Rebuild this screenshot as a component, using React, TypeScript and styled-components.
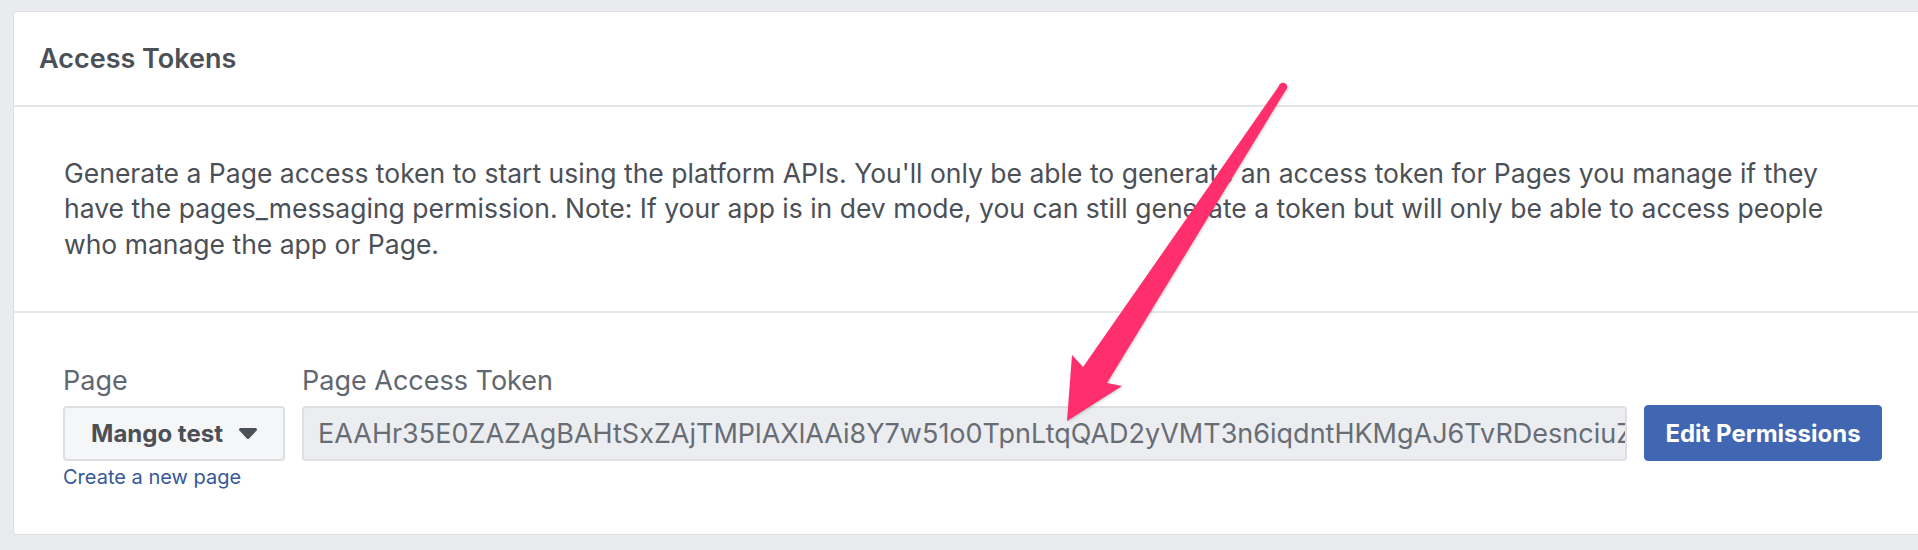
import React from "react";
import styled, { createGlobalStyle } from "styled-components";

const GlobalStyle = createGlobalStyle`
  * {
    box-sizing: border-box;
  }

  body {
    margin: 0;
    background-color: #e9ebee;
    font-family: Inter, "Liberation Sans", Arial, sans-serif;
    color: #4b4f56;
  }
`;

const Page = styled.div`
  position: relative;
  width: 1918px;
  height: 550px;
  padding: 11px 0 0 13px;
  overflow: hidden;
`;

const Card = styled.section`
  background-color: #fff;
  border: 1px solid #dddfe2;
  border-right: none;
  border-radius: 4px 0 0 4px;
  height: 524px;
`;

const CardHeader = styled.header`
  display: flex;
  align-items: center;
  height: 95px;
  padding-left: 25px;
  border-bottom: 2px solid #e5e6e9;
`;

const Title = styled.h2`
  margin: 0;
  font-size: 27px;
  font-weight: 600;
  color: #4b4f56;
`;

const Intro = styled.div`
  display: flex;
  align-items: center;
  height: 206px;
  padding: 0 0 0 50px;
  border-bottom: 2px solid #e5e6e9;
`;

const Text = styled.p`
  margin: 0;
  max-width: 1812px;
  font-size: 26.5px;
  line-height: 35.5px;
  color: #4b4f56;
`;

const Form = styled.div`
  display: flex;
  align-items: flex-start;
  gap: 17px;
  padding: 53px 0 0 49px;
`;

const Field = styled.div<{ $grow?: boolean }>`
  display: flex;
  flex-direction: column;
  flex: ${(p) => (p.$grow ? "0 0 1325px" : "0 0 auto")};
`;

const Label = styled.label`
  font-size: 27px;
  line-height: 30px;
  color: #606770;
  margin-bottom: 10px;
`;

const Select = styled.button`
  display: flex;
  align-items: center;
  justify-content: center;
  gap: 16px;
  width: 222px;
  height: 55px;
  padding: 0;
  background-color: #f5f6f7;
  border: 2px solid #dddfe2;
  border-radius: 4px;
  font-family: inherit;
  font-size: 24px;
  font-weight: 700;
  color: #4b4f56;
`;

const Caret = styled.svg`
  width: 18px;
  height: 11px;
  fill: #4b4f56;
`;

const Link = styled.a`
  margin-top: 5px;
  font-size: 20px;
  line-height: 22px;
  color: #365899;
  text-decoration: none;
`;

const TokenInput = styled.input`
  width: 100%;
  height: 55px;
  padding: 0 0 0 14px;
  background-color: #ebedf0;
  border: 2px solid #dddfe2;
  border-radius: 4px;
  font-family: inherit;
  font-size: 27px;
  color: #686d75;
  outline: none;
`;

const Button = styled.button`
  align-self: flex-end;
  margin-bottom: 27px;
  width: 238px;
  height: 56px;
  background-color: #4267b2;
  border: 1px solid #4267b2;
  border-radius: 4px;
  font-family: inherit;
  font-size: 24px;
  font-weight: 700;
  color: #fff;
`;

const Overlay = styled.svg`
  position: absolute;
  top: 0;
  left: 0;
  width: 1918px;
  height: 550px;
  pointer-events: none;
  filter: drop-shadow(1px 1px 1px rgba(0, 0, 0, 0.18));
`;

const TOKEN =
  "EAAHr35E0ZAZAgBAHtSxZAjTMPlAXlAAi8Y7w51o0TpnLtqQAD2yVMT3n6iqdntHKMgAJ6TvRDesnciuZBZCkR4sL0ZD";

export default function App(): React.ReactElement {
  return (
    <>
      <GlobalStyle />
      <Page>
        <Card>
          <CardHeader>
            <Title>Access Tokens</Title>
          </CardHeader>
          <Intro>
            <Text>
              Generate a Page access token to start using the platform APIs. You'll only be able to
              generate an access token for Pages you manage if they have the pages_messaging
              permission. Note: If your app is in dev mode, you can still generate a token but will
              only be able to access people who manage the app or Page.
            </Text>
          </Intro>
          <Form>
            <Field>
              <Label>Page</Label>
              <Select type="button">
                Mango test
                <Caret viewBox="0 0 18 11">
                  <path d="M1.5 0h15a1.5 1.5 0 0 1 1.1 2.5l-7.5 8a1.5 1.5 0 0 1-2.2 0l-7.5-8A1.5 1.5 0 0 1 1.5 0z" />
                </Caret>
              </Select>
              <Link href="#">Create a new page</Link>
            </Field>
            <Field $grow>
              <Label>Page Access Token</Label>
              <TokenInput readOnly value={TOKEN} />
            </Field>
            <Button type="button">Edit Permissions</Button>
          </Form>
        </Card>
        <Overlay viewBox="0 0 1918 550">
          <path
            fill="#ff2f6e"
            d="M1279.7 84.8 L1083 367 L1072 355 L1067 421 L1122 386 L1107 383 L1286.3 89.2 Z"
          />
          <circle cx="1283" cy="87" r="4.2" fill="#ff2f6e" />
        </Overlay>
      </Page>
    </>
  );
}
